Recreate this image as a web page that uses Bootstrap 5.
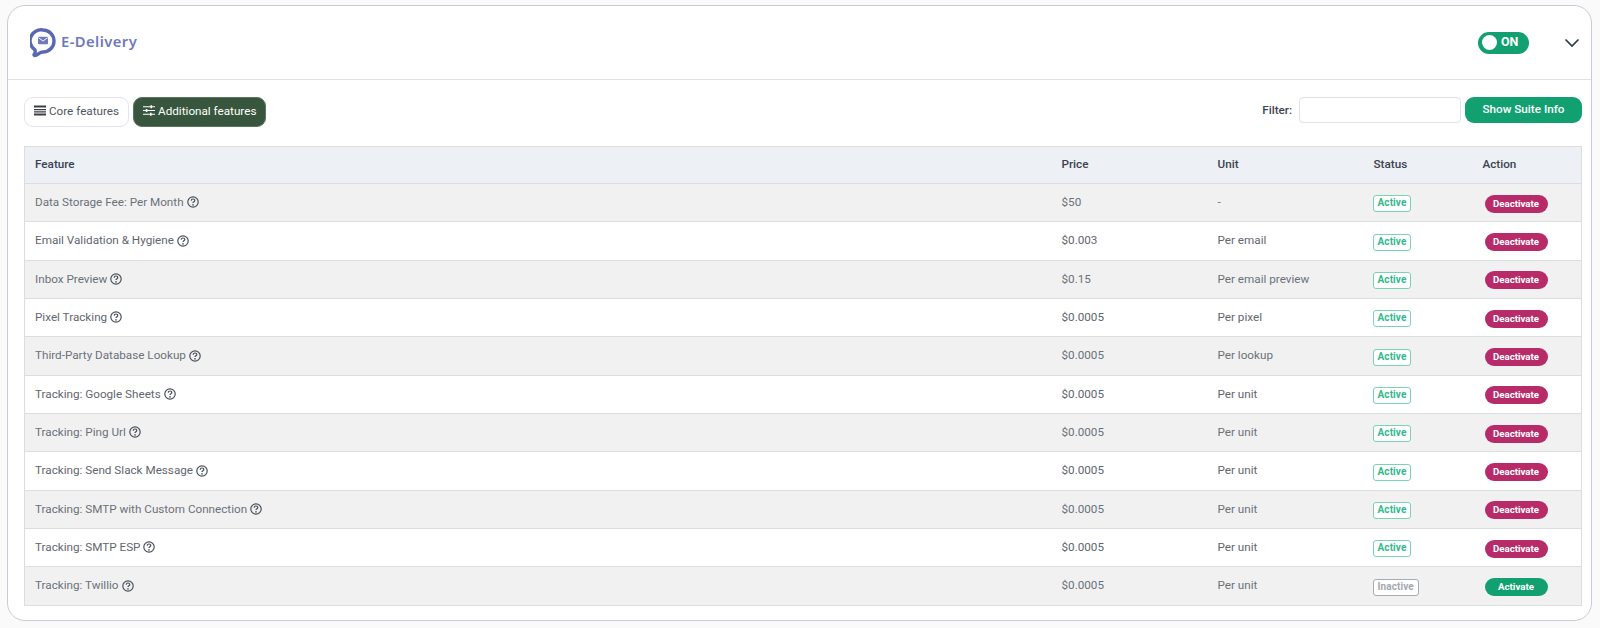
<!DOCTYPE html>
<html lang="en">
<head>
  <meta charset="UTF-8">
  <title>E-Delivery</title>
  <link href="https://cdn.jsdelivr.net/npm/bootstrap@5.3.2/dist/css/bootstrap.min.css" rel="stylesheet">
  <style>
    html, body { height: 628px; overflow: hidden; }
    body { background: #fafafa; font-family: Roboto, sans-serif; font-size: 11.7px; color: #5f6670; padding: 5px 8px 7px 7px; }
    .suite-card { height: 616px; background: #fff; border: 1px solid #c9ccd6; border-radius: 18px; overflow: hidden; }
    .suite-head { height: 74px; border-bottom: 1px solid #dfe1e5; padding: 0 11px 0 22px; }
    .logo-text { font-family: "Noto Sans", sans-serif; font-size: 14.8px; font-weight: 600; color: #6f7abd; margin: 0 0 2px 5px; letter-spacing: .4px; }
    .onoff { width: 51px; height: 22px; background: #12a071; border-radius: 11px; color: #fff; font-size: 12.5px; font-weight: 700; padding: 0 4px; margin-right: 35px; }
    .onoff i { width: 15px; height: 15px; background: #fff; border-radius: 50%; margin-right: 4px; display: block; }
    .suite-body { padding: 17px 9px 0 16px; }
    .tab-btn { height: 30px; border-radius: 9px; font-size: 11.7px; padding: 0 9px 2px 9px; border: 1px solid #e3e5ea; background: #fff; color: #4f5660; line-height: 1; }
    .tab-btn.on { background: #37563d; border-color: #5c7561; color: #fff; margin-left: 4px; }
    .tab-btn svg { margin-right: 3px; vertical-align: -1.5px; }
    .filter-label { font-weight: 500; color: #3d4450; margin-right: 7px; line-height: 26px; }
    .filter-box { width: 162px; height: 26px; border: 1px solid #dfe2e8; border-radius: 4px; padding: 0 6px; margin-right: 4px; font-size: 12px; }
    .info-btn { width: 117px; height: 26px; background: #12a071; color: #fff; border: 0; border-radius: 9px; font-size: 11.7px; font-weight: 500; padding: 0; }
    .feature-table { width: 1558px; margin: 19px 0 0; table-layout: fixed; border: 1px solid #dcdddf; font-size: 11.7px; }
    .feature-table th { height: 37px; background: #edf0f4; color: #3a4352; font-weight: 500; padding: 0 10px; vertical-align: middle; border-bottom: 1px solid #dcdddf; }
    .feature-table td { height: 38.35px; color: #5f6670; padding: 0 10px; vertical-align: middle; border-bottom: 1px solid #dcdddf; background: #fff; }
    .feature-table tr.alt td { background: #f1f1f2; color: #6b7179; }
    .feature-table tr:last-child td { border-bottom: 0; }
    .help-ic { margin-left: 3px; vertical-align: -2.5px; }
    .state { display: inline-block; font-size: 10px; font-weight: 700; line-height: 14px; height: 17px; padding: 0 4px; border-radius: 3px; border: 1px solid #7ad4b3; color: #2dba8e; background: #fff; letter-spacing: .1px; margin: 2px 0 0 -1px; }
    .state.off { border-color: #a8acb3; color: #a3a8b0; }
    .act-pill { display: block; width: 63px; height: 18px; border-radius: 9px; font-size: 9.7px; font-weight: 700; line-height: 18px; text-align: center; color: #fff; background: #b72c68; margin: 2px 0 0 2px; }
    .act-pill.go { background: #12a071; }
  </style>
</head>
<body>
  <div class="suite-card">
    <div class="suite-head d-flex align-items-center">
      <svg width="26" height="30" viewBox="0 0 26 30" aria-hidden="true">
        <path d="M13 2a11 11 0 0 1 0 22c-1.500 0-2.700.4-3.800 1.300-1.300 1-2.800 2-4.400 2.200-.8 0-1-.6-.6-1.100 1-1.300 1.300-2.900.8-4.400A11 11 0 0 1 13 2z" fill="none" stroke="#5a68b4" stroke-width="3.400"/>
        <rect x="8" y="8.800" width="10" height="7.400" rx="1" fill="#6f7abd"/>
        <path d="M8.500 9.800l4.500 3.200 4.500-3.200" fill="none" stroke="#fff" stroke-width=".9"/>
      </svg>
      <span class="logo-text">E-Delivery</span>
      <div class="onoff d-flex align-items-center ms-auto"><i></i>ON</div>
      <svg width="16" height="10" viewBox="0 0 16 10" aria-hidden="true"><path d="M1.500 1.500L8 8l6.500-6.500" fill="none" stroke="#2c3a4e" stroke-width="1.700"/></svg>
    </div>
    <div class="suite-body">
      <div class="d-flex align-items-start">
        <button type="button" class="tab-btn">
          <svg width="12" height="11" viewBox="0 0 12 11" aria-hidden="true"><path d="M0 .5h12v2H0zM0 4h12v1.200H0zM0 6.200h12v1.200H0zM0 8.500h12v2H0z" fill="#3b3f46"/></svg>Core features
        </button>
        <button type="button" class="tab-btn on">
          <svg width="12" height="11" viewBox="0 0 12 11" aria-hidden="true"><path d="M0 1.800h12M0 5.500h12M0 9.200h12" stroke="#fff" stroke-width="1.100"/><path d="M7.500 .3h1.600v3H7.500zM2.800 4h1.600v3H2.800zM7 7.700h1.600v3H7z" fill="#fff"/></svg>Additional features
        </button>
        <span class="filter-label ms-auto">Filter:</span>
        <input type="text" class="filter-box" aria-label="Filter">
        <button type="button" class="info-btn">Show Suite Info</button>
      </div>

      <table class="feature-table" id="features">
        <colgroup><col style="width:1027px"><col style="width:156px"><col style="width:156px"><col style="width:109px"><col></colgroup>
        <thead><tr><th>Feature</th><th>Price</th><th>Unit</th><th>Status</th><th>Action</th></tr></thead>
        <tbody></tbody>
      </table>
    </div>
  </div>

  <script>
    const rows = [
      ["Data Storage Fee: Per Month", "$50", "-", true],
      ["Email Validation & Hygiene", "$0.003", "Per email", true],
      ["Inbox Preview", "$0.15", "Per email preview", true],
      ["Pixel Tracking", "$0.0005", "Per pixel", true],
      ["Third-Party Database Lookup", "$0.0005", "Per lookup", true],
      ["Tracking: Google Sheets", "$0.0005", "Per unit", true],
      ["Tracking: Ping Url", "$0.0005", "Per unit", true],
      ["Tracking: Send Slack Message", "$0.0005", "Per unit", true],
      ["Tracking: SMTP with Custom Connection", "$0.0005", "Per unit", true],
      ["Tracking: SMTP ESP", "$0.0005", "Per unit", true],
      ["Tracking: Twillio", "$0.0005", "Per unit", false]
    ];
    const help = '<svg class="help-ic" width="12" height="12" viewBox="0 0 12 12" aria-hidden="true"><circle cx="6" cy="6" r="5.200" fill="none" stroke="#4a515b" stroke-width="1.200"/><path d="M4.200 4.700C4.200 3.600 5 3 6 3s1.800.6 1.800 1.600c0 1.200-1.800 1.300-1.800 2.500" fill="none" stroke="#4a515b" stroke-width="1.200"/><circle cx="6" cy="8.900" r=".8" fill="#4a515b"/></svg>';
    document.querySelector("#features tbody").innerHTML = rows.map((r, i) => `
      <tr class="${i % 2 === 0 ? "alt" : ""}">
        <td>${r[0].replace("&", "&amp;")}${help}</td>
        <td>${r[1]}</td>
        <td>${r[2]}</td>
        <td><span class="state ${r[3] ? "" : "off"}">${r[3] ? "Active" : "Inactive"}</span></td>
        <td><span class="act-pill ${r[3] ? "" : "go"}">${r[3] ? "Deactivate" : "Activate"}</span></td>
      </tr>`).join("");
  </script>
  <script src="https://cdn.jsdelivr.net/npm/bootstrap@5.3.2/dist/js/bootstrap.bundle.min.js"></script>
</body>
</html>
